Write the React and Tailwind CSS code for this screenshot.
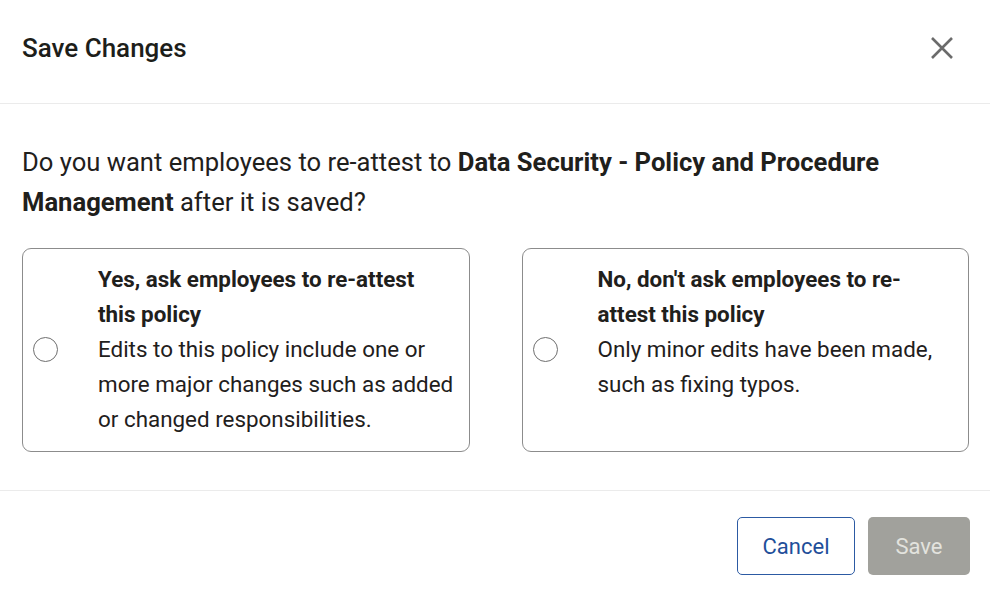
import React from "react";

function Radio() {
  return <div className="w-[25px] h-[25px] shrink-0 rounded-full border border-[#6f6f6f] bg-white" />;
}

function Option({ title, desc }) {
  return (
    <label className="flex-1 flex items-center gap-[40px] pl-[10px] pr-[12px] pt-[13px] pb-[14px] border border-[#8c8c8c] rounded-[9px] cursor-pointer">
      <Radio />
      <div className="self-start text-[22.4px] leading-[35px] text-[#1f201c]">
        <div className="font-bold">{title}</div>
        <div>{desc}</div>
      </div>
    </label>
  );
}

export default function App() {
  return (
    <div className="w-[990px] h-[594px] bg-white flex flex-col" style={{ fontFamily: "Roboto, 'Noto Sans', sans-serif" }}>
      <div className="h-[104px] shrink-0 flex items-center justify-between pl-[22px] pr-[36px] border-b border-[#ebebeb]">
        <h1 className="text-[26px] font-medium text-[#1d1e1a] -mt-[7px]">Save Changes</h1>
        <button className="text-[#6b6b6b] -mt-[8px]" aria-label="Close">
          <svg width="24" height="24" viewBox="0 0 24 24" fill="none" stroke="currentColor" strokeWidth="2.6" strokeLinecap="butt">
            <path d="M2 2L22 22M22 2L2 22" />
          </svg>
        </button>
      </div>
      <div className="px-[21px] pt-[38px] pb-[38px] border-b border-[#ebebeb]">
        <p className="text-[25.6px] leading-[40px] text-[#1f201c] pl-[1px]">
          Do you want employees to re-attest to <span className="font-bold">Data Security - Policy and Procedure Management</span> after it is saved?
        </p>
        <div className="flex gap-[52px] mt-[26px] pl-[1px]">
          <Option
            title="Yes, ask employees to re-attest this policy"
            desc="Edits to this policy include one or more major changes such as added or changed responsibilities."
          />
          <Option
            title="No, don't ask employees to re-attest this policy"
            desc="Only minor edits have been made, such as fixing typos."
          />
        </div>
      </div>
      <div className="flex justify-end gap-[13px] pt-[26px] pr-[20px]">
        <button className="w-[118px] h-[58px] rounded-[5px] border border-[#2c5aa3] text-[#1f4f9a] text-[22px]">Cancel</button>
        <button className="w-[102px] h-[58px] rounded-[5px] bg-[#a1a19c] text-[#e3e3de] text-[22px]" disabled>Save</button>
      </div>
    </div>
  );
}
